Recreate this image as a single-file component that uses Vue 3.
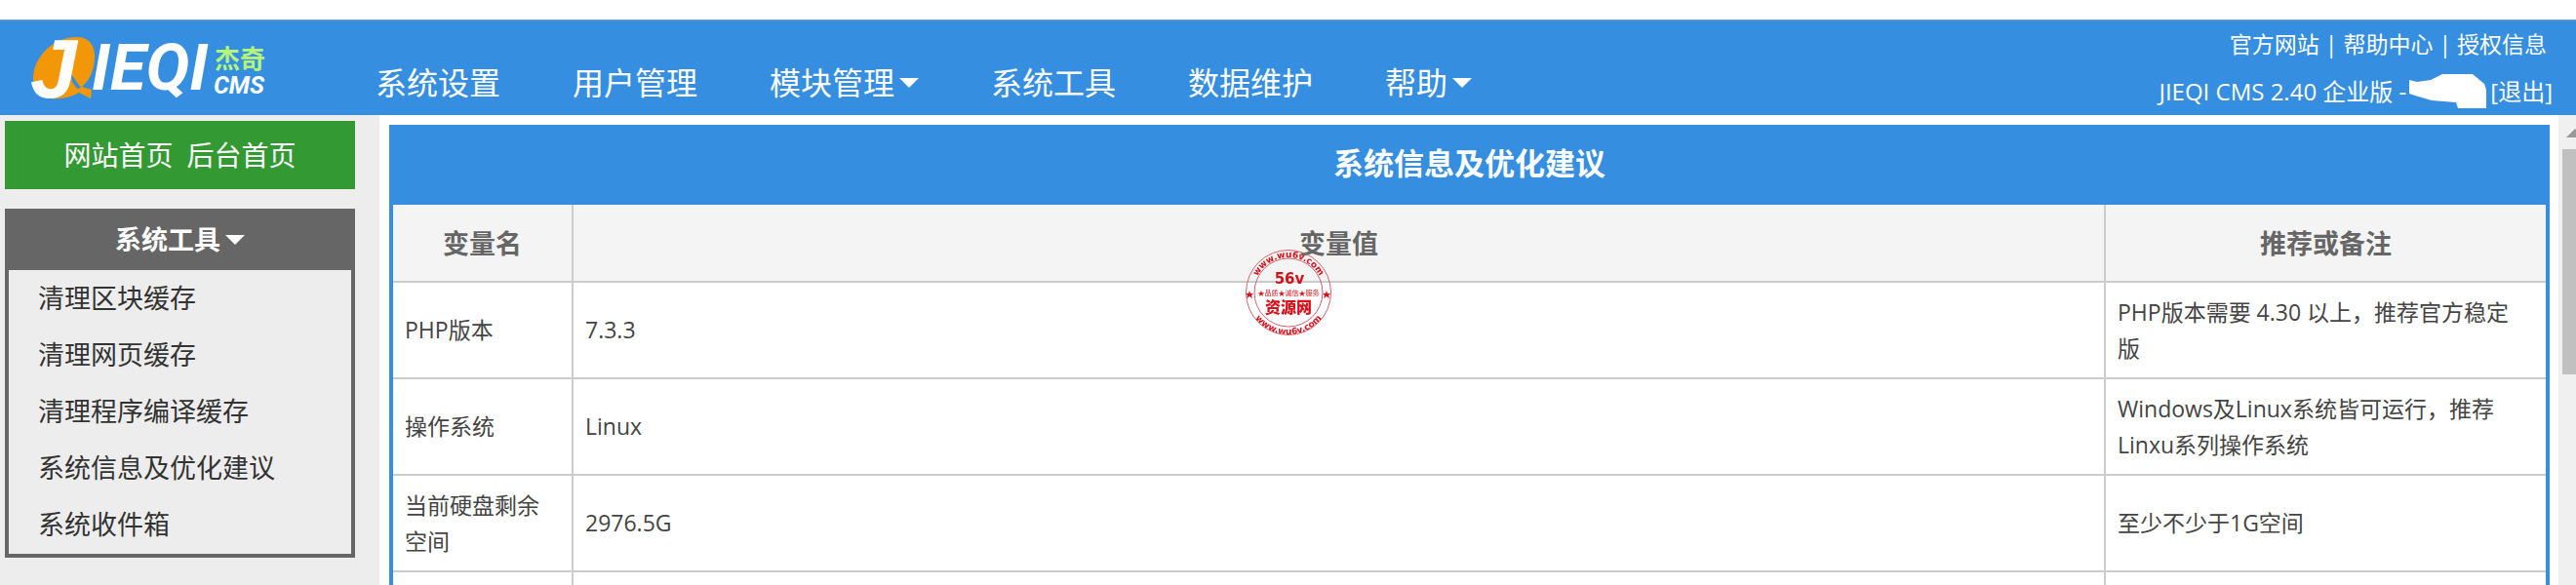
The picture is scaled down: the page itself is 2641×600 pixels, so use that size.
<template>
  <div class="admin">
    <header class="topbar">
      <a class="logo" href="#" aria-label="JIEQI CMS">
        <svg width="242" height="66" viewBox="0 0 242 66">
          <path
            d="M45 0C57 0 63 8 63 20C63 34 58 44 50 51L60 54L59 63L47 57C38 62 28 64 19 63C5 61 0 50 0 40C2 18 22 0 45 0Z"
            fill="#f29707"
          />
          <path d="M39 38L49 52L45 53L40 46Z" fill="#358ee0" />
          <text class="logo-initial" x="-3" y="62">J</text>
          <text class="logo-name" x="60" y="54">IEQI</text>
          <text class="logo-cn" x="186" y="32">杰奇</text>
          <text class="logo-cms" x="185" y="58">CMS</text>
        </svg>
      </a>
      <nav class="nav">
        <a v-for="item in navItems" :key="item.label" href="#">
          {{ item.label }}<span v-if="item.menu" class="caret"></span>
        </a>
      </nav>
      <div class="account">
        <div class="links">
          <a href="#">官方网站</a> | <a href="#">帮助中心</a> | <a href="#">授权信息</a>
        </div>
        <div class="license">
          <span>JIEQI CMS 2.40 企业版 -</span>
          <svg class="user-mask" width="80" height="36" viewBox="0 0 80 36">
            <path d="M0 6L8 8L22 6L34 0H65L77 10L79 16V35H50L48 29L23 27L6 22L0 20Z" fill="#fff" />
          </svg>
          <a href="#">[退出]</a>
        </div>
      </div>
    </header>

    <div class="body">
      <aside class="sidebar">
        <div class="home-links">
          <a href="#">网站首页</a>
          <a href="#">后台首页</a>
        </div>
        <div class="side-menu">
          <h2>系统工具<span class="caret"></span></h2>
          <ul>
            <li v-for="item in sideItems" :key="item"><a href="#">{{ item }}</a></li>
          </ul>
        </div>
      </aside>

      <main class="content">
        <table>
          <caption>系统信息及优化建议</caption>
          <thead>
            <tr>
              <th class="col-name">变量名</th>
              <th>变量值</th>
              <th class="col-note">推荐或备注</th>
            </tr>
          </thead>
          <tbody>
            <tr v-for="row in rows" :key="row.name">
              <td>{{ row.name }}</td>
              <td>{{ row.value }}</td>
              <td>{{ row.note }}</td>
            </tr>
          </tbody>
        </table>
      </main>

      <div class="scrollbar">
        <span class="scroll-up"></span>
        <span class="scroll-thumb"></span>
      </div>
    </div>

    <svg class="stamp" width="90" height="90" viewBox="-45 -45 90 90">
      <defs>
        <path id="arc-top" d="M-36 0A36 36 0 0 1 36 0" />
        <path id="arc-bottom" d="M-43 0A43 43 0 0 0 43 0" />
        <path id="star" d="M0 -4L1 -1L4 -1L2 1L3 4L0 2L-3 4L-2 1L-4 -1L-1 -1Z" />
      </defs>
      <circle r="43.5" />
      <circle r="35" />
      <text class="stamp-url"><textPath href="#arc-top" startOffset="50%">www.wu6v.com</textPath></text>
      <text class="stamp-url"><textPath href="#arc-bottom" startOffset="50%">www.wu6v.com</textPath></text>
      <use href="#star" x="-40" y="2" />
      <use href="#star" x="39" y="2" />
      <text class="stamp-brand" x="1" y="-9">56v</text>
      <text class="stamp-motto" x="0" y="3">★品质★诚信★服务</text>
      <text class="stamp-name" x="0" y="21">资源网</text>
    </svg>
  </div>
</template>

<script setup>
const navItems = [
  { label: '系统设置' },
  { label: '用户管理' },
  { label: '模块管理', menu: true },
  { label: '系统工具' },
  { label: '数据维护' },
  { label: '帮助', menu: true }
]

const sideItems = ['清理区块缓存', '清理网页缓存', '清理程序编译缓存', '系统信息及优化建议', '系统收件箱']

const rows = [
  { name: 'PHP版本', value: '7.3.3', note: 'PHP版本需要 4.30 以上，推荐官方稳定版' },
  { name: '操作系统', value: 'Linux', note: 'Windows及Linux系统皆可运行，推荐Linxu系列操作系统' },
  { name: '当前硬盘剩余空间', value: '2976.5G', note: '至少不少于1G空间' },
  { name: '', value: '', note: '' }
]
</script>

<style>
body {
  margin: 0;
  overflow: hidden;
}
</style>

<style scoped>
.admin {
  display: flex;
  flex-direction: column;
  box-sizing: border-box;
  height: 100vh;
  padding-top: 20px;
  background: #fff;
  color: #444;
  font-family: "Open Sans", "Noto Sans CJK SC", sans-serif;
  font-size: 23px;
  line-height: 37px;
}

a {
  color: inherit;
  text-decoration: none;
}

.topbar {
  display: flex;
  flex: none;
  box-sizing: border-box;
  height: 98px;
  padding: 0 24px 0 34px;
  border-top: 1px solid #8a9bab;
  background: #358ee0;
  color: #fff;
}

.logo {
  margin-top: 17px;
}

.logo svg {
  display: block;
  overflow: visible;
}

.logo text {
  fill: #fff;
  font-family: Roboto, "Noto Sans CJK SC", sans-serif;
  font-style: italic;
  font-weight: 700;
}

.logo .logo-initial {
  font-family: "Liberation Sans", sans-serif;
  font-size: 86px;
}

.logo .logo-name {
  font-size: 67px;
}

.logo .logo-cn {
  fill: #b4f47a;
  font-size: 26px;
  font-style: normal;
}

.logo .logo-cms {
  font-size: 25px;
}

.nav {
  display: flex;
  gap: 74px;
  margin-left: 109px;
  font-size: 32px;
  line-height: 48px;
  padding-top: 40px;
  height: 48px;
}

.nav a {
  display: flex;
  align-items: center;
  white-space: nowrap;
}

.caret {
  display: inline-block;
  margin-left: 5px;
  border: 10px solid transparent;
  border-top-color: currentColor;
  border-bottom-width: 0;
}

.account {
  margin-left: auto;
  text-align: right;
  white-space: nowrap;
}

.links {
  padding: 6px 6px 0 0;
}

.license {
  display: flex;
  justify-content: flex-end;
  align-items: center;
  gap: 3px;
  margin-top: 11px;
  font-size: 24px;
}

.body {
  display: flex;
  flex: 1;
  min-height: 0;
}

.sidebar {
  flex: none;
  box-sizing: border-box;
  width: 389px;
  padding: 6px 25px 0 5px;
  background: #ededed;
  color: #333;
  font-size: 27px;
}

.home-links {
  display: flex;
  justify-content: center;
  gap: 14px;
  background: #339933;
  color: #fff;
  font-size: 28px;
  line-height: 70px;
}

.side-menu {
  margin-top: 20px;
  border: 4px solid #666;
  border-top: 0;
}

.side-menu h2 {
  margin: 0;
  background: #666;
  color: #fff;
  font-size: 27px;
  line-height: 63px;
  text-align: center;
}

.side-menu .caret {
  vertical-align: 5px;
}

.side-menu ul {
  margin: 0;
  padding: 0 0 1px 30px;
  list-style: none;
  line-height: 58px;
}

.content {
  flex: 1;
  min-width: 0;
  padding: 10px 9px 0 10px;
  overflow: hidden;
}

table {
  box-sizing: border-box;
  width: 100%;
  border-collapse: separate;
  border-spacing: 0;
  border: 4px solid #358ee0;
  table-layout: fixed;
}

caption {
  background: #358ee0;
  color: #fff;
  font-size: 31px;
  font-weight: 700;
  line-height: 78px;
}

th,
td {
  box-sizing: border-box;
  border-right: 2px solid #ccc;
  border-bottom: 2px solid #ccc;
}

th:last-child,
td:last-child {
  border-right: 0;
}

th {
  height: 80px;
  padding: 0;
  background: #f4f4f4;
  color: #666;
  font-size: 27px;
}

td {
  height: 99px;
  padding: 0 12px;
  word-break: break-word;
}

td:last-child {
  padding-right: 20px;
}

.col-name {
  width: 185px;
}

.col-note {
  width: 451px;
}

.scrollbar {
  flex: none;
  width: 18px;
  background: #f0f0f0;
  overflow: hidden;
}

.scroll-up {
  display: block;
  margin: 14px 0 12px 8px;
  border: 9px solid transparent;
  border-top-width: 0;
  border-bottom-color: #999;
  width: 0;
}

.scroll-thumb {
  display: block;
  height: 231px;
  margin-left: 4px;
  background: #c0c0c0;
}

.stamp {
  position: fixed;
  top: 50%;
  left: 50%;
  margin: -45px 0 0 -45px;
  fill: #d8101a;
}

.stamp circle {
  fill: none;
  stroke: #d8606a;
}

.stamp text {
  text-anchor: middle;
}

.stamp .stamp-url {
  font-family: "DejaVu Sans", sans-serif;
  font-size: 9px;
  font-weight: 700;
}

.stamp .stamp-brand {
  font-family: "DejaVu Sans", sans-serif;
  font-size: 15px;
  font-weight: 700;
}

.stamp .stamp-motto {
  font-size: 7px;
}

.stamp .stamp-name {
  font-size: 16px;
  font-weight: 900;
}
</style>
